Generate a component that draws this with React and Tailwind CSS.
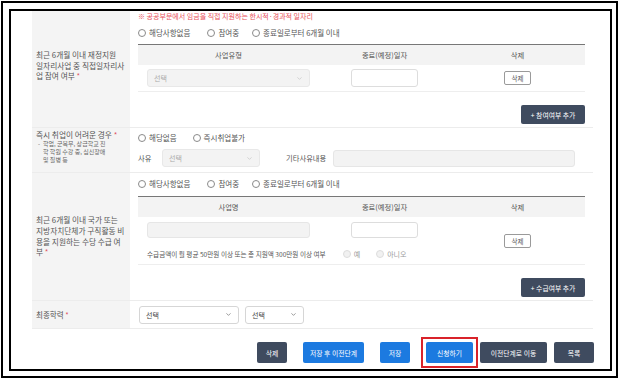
import { ChevronDown } from 'lucide-react'

const Radio = ({ label, disabled, className = '' }) => (
  <div className={'flex items-center gap-[3px] ' + className}>
    <span className={disabled ? 'w-[8px] h-[8px] rounded-full border border-[#ddd] bg-[#f1f1f1]' : 'w-[8px] h-[8px] rounded-full border border-[#8a8a8a] bg-white'} />
    <span className={disabled ? 'text-[#999]' : 'text-[#555]'}>{label}</span>
  </div>
)

const Select = ({ className, disabled }) => (
  <div
    className={
      (disabled
        ? 'bg-[#f3f3f3] border-[#e8e8e8] text-[#aaa] '
        : 'bg-white border-[#d6d6d6] text-[#444] ') +
      'flex items-center justify-between rounded-[3px] border px-[6px] text-[7px] ' +
      className
    }
  >
    <span>선택</span>
    <ChevronDown size={7} strokeWidth={2} className={disabled ? 'text-[#bbb]' : 'text-[#555]'} />
  </div>
)

const Star = () => <span className="text-[#e0505b]"> *</span>

const SmallBtn = () => (
  <div className="w-[27px] h-[14px] flex items-center justify-center rounded-[2px] border border-[#9a9a9a] bg-white text-[#555] text-[6.5px]">
    삭제
  </div>
)

const AddBtn = ({ children }) => (
  <div className="w-[64px] h-[19px] flex items-center justify-center rounded-[2px] bg-[#3f4b5f] text-white text-[6.8px]">
    {children}
  </div>
)

const TableHead = ({ first }) => (
  <div className="h-[21px] flex items-center border-t border-[#777] bg-[#f3f3f3] text-[#555] text-[7.3px]">
    <div className="w-[181px] text-center">{first}</div>
    <div className="w-[131px] text-center">종료(예정)일자</div>
    <div className="flex-1 text-center">삭제</div>
  </div>
)

const ThreeRadios = () => (
  <div className="h-[12px] flex items-center text-[7.5px]">
    <Radio label="해당사항없음" />
    <Radio label="참여중" className="ml-[17px]" />
    <Radio label="종료일로부터 6개월 이내" className="ml-[13px]" />
  </div>
)

export default function App() {
  return (
    <div className="w-[620px] h-[379px] bg-white overflow-hidden pt-[1px] pl-[1px] font-[family-name:'Noto_Sans_CJK_KR','Noto_Sans',sans-serif] text-[7px] leading-[10px]">
      <div className="w-[617px] h-[377px] border-2 border-black">
        <div className="ml-[6px] mt-[6px] w-[603px] h-[362px] border-2 border-black overflow-hidden">
          <div className="ml-[21px] w-[561px]">
            {/* 직접일자리사업 */}
            <div className="flex h-[117px] border-b border-[#ececec]">
              <div className="w-[98px] bg-[#f4f4f4] pl-[4px] pt-[39px] text-[#555] text-[7.7px] leading-[10.5px]">
                <div className="whitespace-nowrap">최근 6개월 이내 재정지원</div>
                <div className="whitespace-nowrap">일자리사업 중 직접일자리사</div>
                <div className="whitespace-nowrap">업 참여 여부<Star /></div>
              </div>
              <div className="flex-1 px-[8px]">
                <div className="h-[10px] text-[#e8505b] whitespace-nowrap">※ 공공부문에서 임금을 직접 지원하는 한시적·경과적 일자리</div>
                <div className="mt-[6px]">
                  <ThreeRadios />
                </div>
                <div className="mt-[5px]">
                  <TableHead first="사업유형" />
                  <div className="h-[27px] flex items-center border-b border-[#eee]">
                    <div className="w-[181px] px-[9px]">
                      <Select disabled className="h-[18px]" />
                    </div>
                    <div className="w-[131px] flex justify-center">
                      <div className="w-[67px] h-[18px] rounded-[3px] border border-[#ddd] bg-white" />
                    </div>
                    <div className="flex-1 flex justify-center">
                      <SmallBtn />
                    </div>
                  </div>
                </div>
                <div className="mt-[13px] flex justify-end">
                  <AddBtn>+ 참여여부 추가</AddBtn>
                </div>
              </div>
            </div>

            {/* 즉시 취업이 어려운 경우 */}
            <div className="flex h-[45px] border-b border-[#ececec]">
              <div className="w-[98px] bg-[#f4f4f4] pl-[4px] pt-[2px] text-[#555]">
                <div className="whitespace-nowrap text-[7.7px]">즉시 취업이 어려운 경우<Star /></div>
                <div className="flex text-[6px] leading-[8px] text-[#666]">
                  <span className="w-[7px] pl-[2px]">-</span>
                  <div>
                    <div className="whitespace-nowrap">학업, 군복무, 상급학교 진</div>
                    <div className="whitespace-nowrap">학 학원 수강 중, 심신장애</div>
                    <div className="whitespace-nowrap">및 질병 등</div>
                  </div>
                </div>
              </div>
              <div className="flex-1 px-[8px] pt-[4px]">
                <div className="h-[12px] flex items-center text-[7.5px]">
                  <Radio label="해당없음" />
                  <Radio label="즉시취업불가" className="ml-[16px]" />
                </div>
                <div className="mt-[5px] h-[18px] flex items-center text-[#555] text-[7.3px]">
                  <span className="w-[24px]">사유</span>
                  <Select disabled className="w-[98px] h-[18px]" />
                  <span className="ml-[26px] w-[47px] whitespace-nowrap">기타사유내용</span>
                  <div className="w-[242px] h-[17px] rounded-[3px] border border-[#e6e6e6] bg-[#f3f3f3]" />
                </div>
              </div>
            </div>

            {/* 구직활동 수당 */}
            <div className="flex h-[128px] border-b border-[#ececec]">
              <div className="w-[98px] bg-[#f4f4f4] pl-[4px] flex flex-col justify-center text-[#555] text-[7.7px] leading-[10.7px]">
                <div className="whitespace-nowrap">최근 6개월 이내 국가 또는</div>
                <div className="whitespace-nowrap">지방자치단체가 구직활동 비</div>
                <div className="whitespace-nowrap">용을 지원하는 수당 수급 여</div>
                <div className="whitespace-nowrap">부<Star /></div>
              </div>
              <div className="flex-1 px-[8px] pt-[5px]">
                <ThreeRadios />
                <div className="mt-[6px]">
                  <TableHead first="사업명" />
                  <div className="h-[48px] flex items-center border-b border-[#eee]">
                    <div className="w-[312px] h-full pt-[5px]">
                      <div className="flex">
                        <div className="w-[181px] px-[9px]">
                          <div className="h-[16px] rounded-[3px] border border-[#e6e6e6] bg-[#f3f3f3]" />
                        </div>
                        <div className="w-[131px] flex justify-center">
                          <div className="w-[67px] h-[16px] rounded-[3px] border border-[#ddd] bg-white" />
                        </div>
                      </div>
                      <div className="mt-[11px] pl-[9px] flex items-center text-[#555]">
                        <span className="whitespace-nowrap text-[6.6px]">수급금액이 월 평균 50만원 이상 또는 총 지원액 300만원 이상 여부</span>
                        <div className="ml-[17px] flex items-center text-[7px]">
                          <Radio label="예" disabled />
                          <Radio label="아니오" disabled className="ml-[16px]" />
                        </div>
                      </div>
                    </div>
                    <div className="flex-1 flex justify-center">
                      <SmallBtn />
                    </div>
                  </div>
                </div>
                <div className="mt-[13px] flex justify-end">
                  <AddBtn>+ 수급여부 추가</AddBtn>
                </div>
              </div>
            </div>

            {/* 최종학력 */}
            <div className="flex h-[28px] border-b border-[#ececec]">
              <div className="w-[98px] bg-[#f4f4f4] pl-[4px] flex items-center text-[#555] text-[7.5px]">
                <span>최종학력<Star /></span>
              </div>
              <div className="flex-1 pl-[9px] flex items-center gap-[6px]">
                <Select className="w-[100px] h-[18px]" />
                <Select className="w-[59px] h-[18px]" />
              </div>
            </div>
          </div>

          {/* 하단 버튼 */}
          <div className="ml-[21px] w-[562px] mt-[8px] flex items-center justify-end text-white text-[6.8px]">
            <div className="w-[30px] h-[21px] flex items-center justify-center rounded-[2px] bg-[#3f4b5f]">삭제</div>
            <div className="ml-[16px] w-[61px] h-[21px] flex items-center justify-center rounded-[2px] bg-[#1c7ae0]">저장 후 이전단계</div>
            <div className="ml-[16px] w-[30px] h-[21px] flex items-center justify-center rounded-[2px] bg-[#1c7ae0]">저장</div>
            <div className="ml-[11px] w-[57px] h-[31px] flex items-center justify-center border-2 border-[#d9232a]">
              <div className="w-[47px] h-[21px] flex items-center justify-center rounded-[2px] bg-[#1c7ae0]">신청하기</div>
            </div>
            <div className="ml-[2px] w-[67px] h-[21px] flex items-center justify-center rounded-[2px] bg-[#3f4b5f]">이전단계로 이동</div>
            <div className="ml-[7px] w-[40px] h-[21px] flex items-center justify-center rounded-[2px] bg-[#3f4b5f]">목록</div>
          </div>
        </div>
      </div>
    </div>
  )
}
